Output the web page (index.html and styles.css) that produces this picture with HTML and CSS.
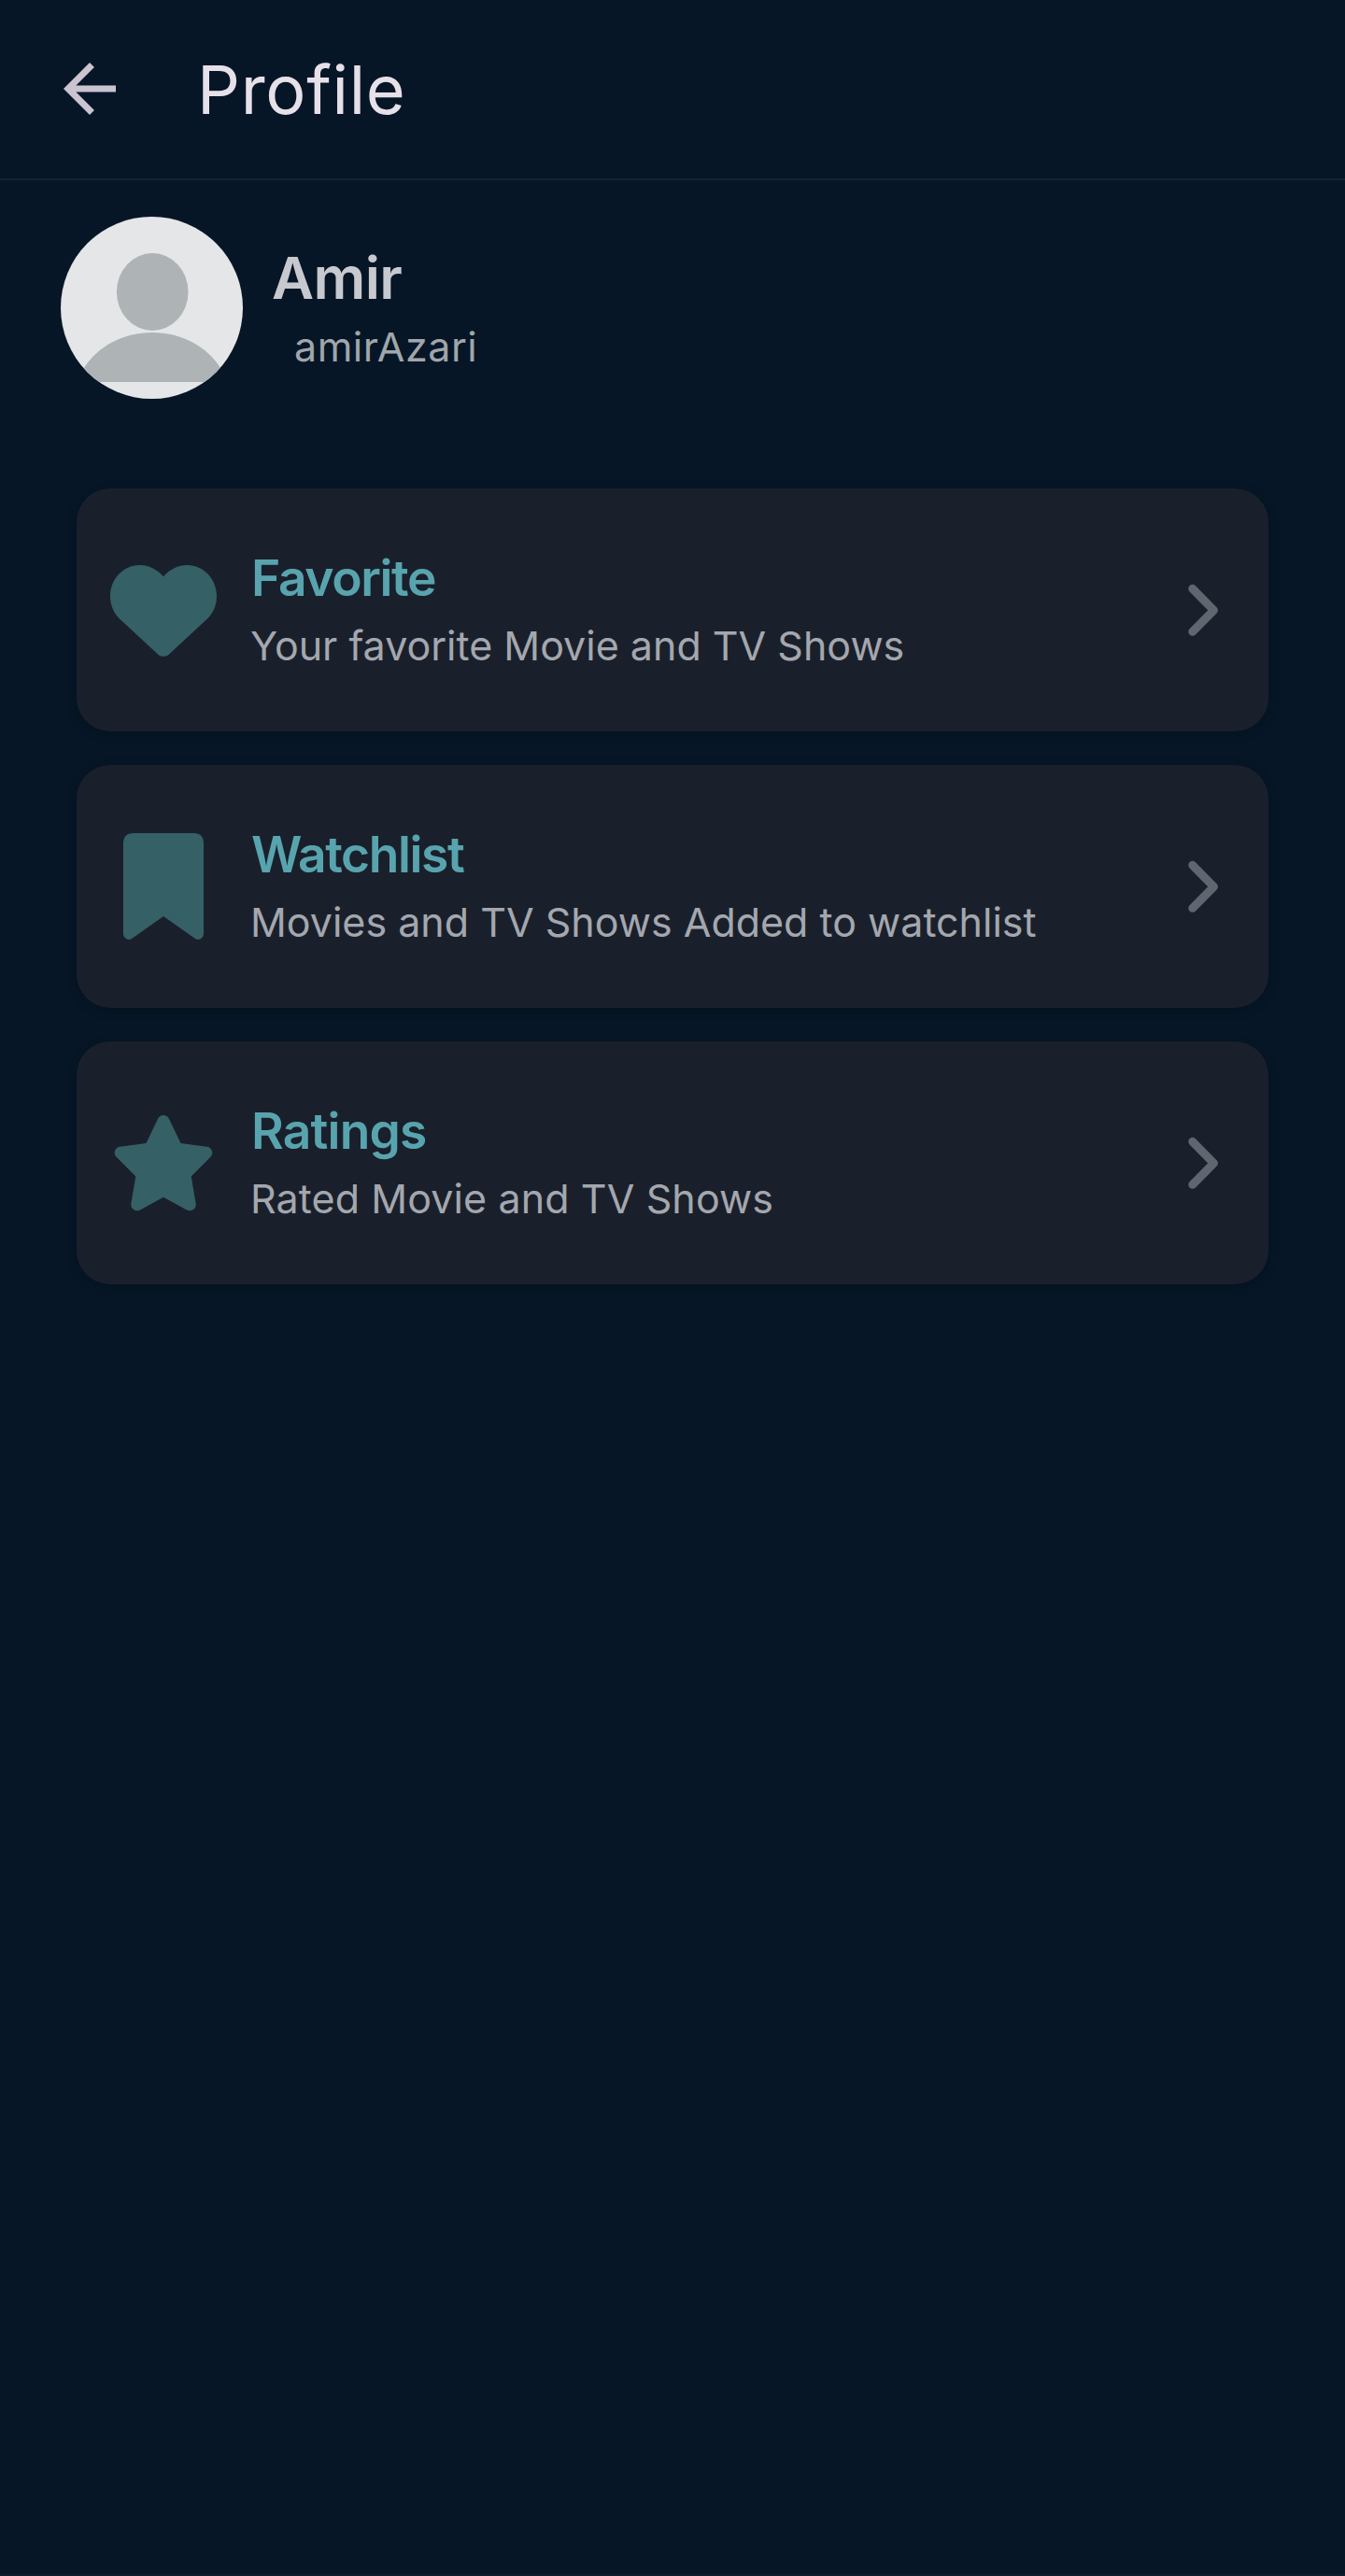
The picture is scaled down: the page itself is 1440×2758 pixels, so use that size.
FILE: index.html
```html
<!DOCTYPE html>
<html lang="en">
<head>
<meta charset="utf-8">
<title>Profile</title>
<link rel="stylesheet" href="styles.css">
</head>
<body>
<div class="screen">
  <header class="topbar">
    <svg class="topbar-back" viewBox="0 0 24 24" aria-label="Back"><path d="M20 11H7.83l5.59-5.59L12 4l-8 8 8 8 1.42-1.41L7.83 13H20v-2z"/></svg>
    <h1 class="topbar-title">Profile</h1>
  </header>
  <section class="profile">
    <svg class="avatar" viewBox="0 0 195 195">
      <clipPath id="avatar-clip"><circle cx="97.5" cy="97.5" r="97.5"/></clipPath>
      <circle class="avatar-bg" cx="97.5" cy="97.5" r="97.5"/>
      <g class="avatar-person" clip-path="url(#avatar-clip)">
        <ellipse cx="98.2" cy="80.5" rx="38.3" ry="41.5"/>
        <path d="M19 177L25 162C40 138 68 124 98 124S156 138 171 162L178 177Z"/>
      </g>
    </svg>
    <div class="profile-text">
      <h2 class="profile-name">Amir</h2>
      <p class="profile-user">amirAzari</p>
    </div>
  </section>
  <main class="cards">
    <a class="card">
      <svg class="card-icon" viewBox="0 0 114 114"><path d="M57 21.3C50 13.5 41 9 31.5 9C14 9 0 24 0 42.3C0 51.5 3.5 60 9.5 66L50.5 104C54 107.8 60 107.8 63.5 104L104.5 66C110.5 60 114 51.5 114 42.3C114 24 100 9 82.5 9C73 9 64 13.5 57 21.3Z"/></svg>
      <div class="card-text">
        <h3 class="card-title card-title-favorite">Favorite</h3>
        <p class="card-sub">Your favorite Movie and TV Shows</p>
      </div>
      <svg class="chevron" viewBox="0 0 33 56"><path d="M5.8 5.3L28.5 28.3L5.8 51.3"/></svg>
    </a>
    <a class="card">
      <svg class="card-icon" viewBox="0 0 114 114"><path d="M25 0H89Q100 0 100 11V107.5C100 112.5 95 115.5 91 113L57 89L23 113C19 115.5 14 112.5 14 107.5V11Q14 0 25 0Z"/></svg>
      <div class="card-text">
        <h3 class="card-title card-title-watchlist">Watchlist</h3>
        <p class="card-sub">Movies and TV Shows Added to watchlist</p>
      </div>
      <svg class="chevron" viewBox="0 0 33 56"><path d="M5.8 5.3L28.5 28.3L5.8 51.3"/></svg>
    </a>
    <a class="card">
      <svg class="card-icon" viewBox="0 0 114 114"><path d="M51.2 9.5C53.5 4.8 60.5 4.8 62.8 9.5L75.5 36L103.5 39.8C108.8 40.5 111.3 46.8 107.3 50.8L86.7 71.5L91.7 101C92.3 106.3 87 109.8 82 107.4L57 93.7L32 107.4C27 109.8 21.7 106.3 22.3 101L27.3 71.5L6.7 50.8C2.7 46.8 5.2 40.5 10.5 39.8L38.5 36Z"/></svg>
      <div class="card-text">
        <h3 class="card-title card-title-ratings">Ratings</h3>
        <p class="card-sub card-sub-ratings">Rated Movie and TV Shows</p>
      </div>
      <svg class="chevron" viewBox="0 0 33 56"><path d="M5.8 5.3L28.5 28.3L5.8 51.3"/></svg>
    </a>
  </main>
</div>
</body>
</html>
```
FILE: styles.css
```css
* { box-sizing: border-box; margin: 0; padding: 0; }
body { background: #061626; font-family: Inter, "Liberation Sans", sans-serif; }
.screen { min-height: 2758px; border-bottom: 2px solid #0e1d30; }

.topbar { display: flex; align-items: center; gap: 73px; height: 193px; padding-left: 54px; border-bottom: 2px solid #142332; }
.topbar-back { width: 84px; height: 84px; margin-bottom: 2px; fill: #cac4d0; }
.topbar-title { font-size: 72px; font-weight: 400; line-height: 90px; letter-spacing: 0.7px; color: #e6e0e9; }

.profile { display: flex; align-items: flex-start; gap: 31px; padding: 39px 65px 96px; }
.avatar { width: 195px; height: 195px; }
.avatar-bg { fill: #e4e6e8; }
.avatar-person { fill: #aeb3b6; }
.profile-text { padding-top: 28px; height: 195px; }
.profile-name { font-size: 62px; font-weight: 600; line-height: 75px; letter-spacing: -0.6px; color: #c7c9cf; }
.profile-user { padding-left: 24px; font-size: 43px; line-height: 73px; letter-spacing: 0.53px; color: #a0a6ab; }

.cards { display: flex; flex-direction: column; gap: 36px; padding: 0 82px; }
.card { display: flex; align-items: center; height: 260px; padding: 0 54px 0 36px; border-radius: 36px; background: #1a202b; box-shadow: 0 3px 12px rgba(0, 0, 0, 0.18); }
.card-icon { width: 114px; height: 114px; fill: #356066; }
.card-text { flex: 1; padding: 4px 0 0 36px; }
.card-title { padding-left: 1px; font-size: 53.3px; font-weight: 600; line-height: 73px; color: #58a4ae; }
.card-title-favorite { letter-spacing: -1.4px; }
.card-title-watchlist { letter-spacing: -1.4px; }
.card-title-ratings { letter-spacing: -0.8px; }
.card-sub { font-size: 43px; line-height: 73px; color: #a4a7ae; white-space: nowrap; }
.card-sub-ratings { letter-spacing: 0.1px; }
.chevron { width: 33px; height: 56px; fill: none; stroke: #5f666f; stroke-width: 9; stroke-linecap: round; stroke-linejoin: round; }
```
